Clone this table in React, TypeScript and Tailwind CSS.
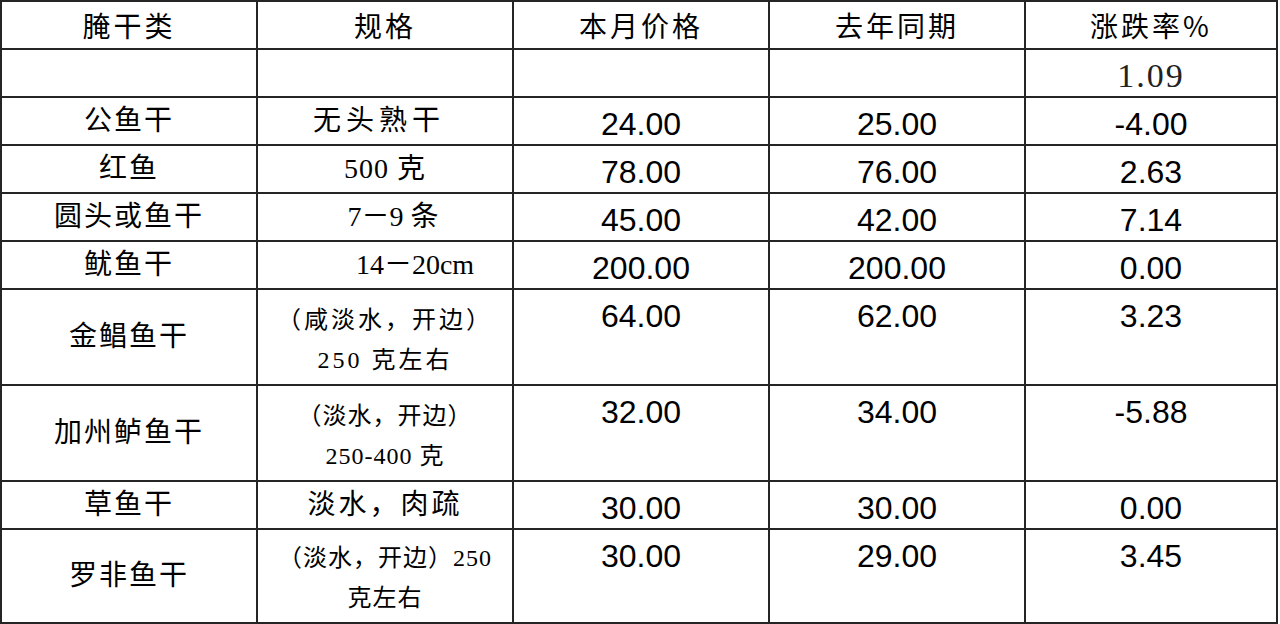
import React from "react";

type Row = {
  name: string;
  spec: string[];
  cur: string;
  prev: string;
  rate: string;
  tall?: boolean;
  specCls: string;
};

const rows: Row[] = [
  { name: "公鱼干", spec: ["无头熟干"], cur: "24.00", prev: "25.00", rate: "-4.00", specCls: "text-[28px] tracking-[5px] pr-[12px]" },
  { name: "红鱼", spec: ["500 克"], cur: "78.00", prev: "76.00", rate: "2.63", specCls: "text-[28px] tracking-[1px]" },
  { name: "圆头或鱼干", spec: ["7－9 条"], cur: "45.00", prev: "42.00", rate: "7.14", specCls: "text-[28px] tracking-[0px] pl-[16px]" },
  { name: "鱿鱼干", spec: ["14－20cm"], cur: "200.00", prev: "200.00", rate: "0.00", specCls: "text-[28px] tracking-[0px] pl-[60px]" },
  { name: "金鲳鱼干", spec: ["（咸淡水，开边）", "250 克左右"], cur: "64.00", prev: "62.00", rate: "3.23", tall: true, specCls: "text-[24px] leading-[40px] tracking-[3px] pt-[6px]" },
  { name: "加州鲈鱼干", spec: ["（淡水，开边）", "250-400 克"], cur: "32.00", prev: "34.00", rate: "-5.88", tall: true, specCls: "text-[24px] leading-[40px] tracking-[1px] pt-[6px]" },
  { name: "草鱼干", spec: ["淡水，肉疏"], cur: "30.00", prev: "30.00", rate: "0.00", specCls: "text-[28px] tracking-[3px]" },
  { name: "罗非鱼干", spec: ["（淡水，开边）250", "克左右"], cur: "30.00", prev: "29.00", rate: "3.45", tall: true, specCls: "text-[24px] leading-[40px] tracking-[1px] pt-[4px]" },
];

const serif = "font-['Liberation_Serif','Noto_Sans_CJK_SC',serif]";
const sans = "font-['Liberation_Sans','Noto_Sans_CJK_SC',sans-serif]";

function Header({ text }: { text: string }) {
  return (
    <div className="bg-white flex items-center justify-center font-['Noto_Sans_CJK_SC',sans-serif] text-[28px] font-normal tracking-[3px] text-black">
      {text}
    </div>
  );
}

function Num({ v }: { v: string }) {
  return (
    <div className={`bg-white flex justify-center items-start pt-[10px] ${sans} text-[32px] leading-none text-black`}>
      {v}
    </div>
  );
}

export default function App() {
  return (
    <div className="w-[1280px] h-[624px] bg-white">
      <div className="w-[1278px] grid grid-cols-[254px_254px_254px_254px_250px] grid-rows-[46px_46px_46px_46px_46px_46px_94px_94px_46px_92px] gap-[2px] p-[2px] bg-[#252525]">
        <Header text="腌干类" />
        <Header text="规格" />
        <Header text="本月价格" />
        <Header text="去年同期" />
        <Header text="涨跌率%" />

        <div className="bg-white" />
        <div className="bg-white" />
        <div className="bg-white" />
        <div className="bg-white" />
        <div className="bg-white flex items-center justify-center pt-[4px] font-['Liberation_Serif',serif] text-[34px] tracking-[2px] text-[#222]">
          1.09
        </div>

        {rows.map((r) => (
          <React.Fragment key={r.name}>
            <div className={`bg-white flex items-center justify-center ${serif} text-[28px] tracking-[2px] text-black`}>
              {r.name}
            </div>
            <div className={`bg-white flex flex-col items-center justify-center ${serif} text-black ${r.specCls}`}>
              {r.spec.map((s) => (
                <div key={s}>{s}</div>
              ))}
            </div>
            <Num v={r.cur} />
            <Num v={r.prev} />
            <Num v={r.rate} />
          </React.Fragment>
        ))}
      </div>
    </div>
  );
}
